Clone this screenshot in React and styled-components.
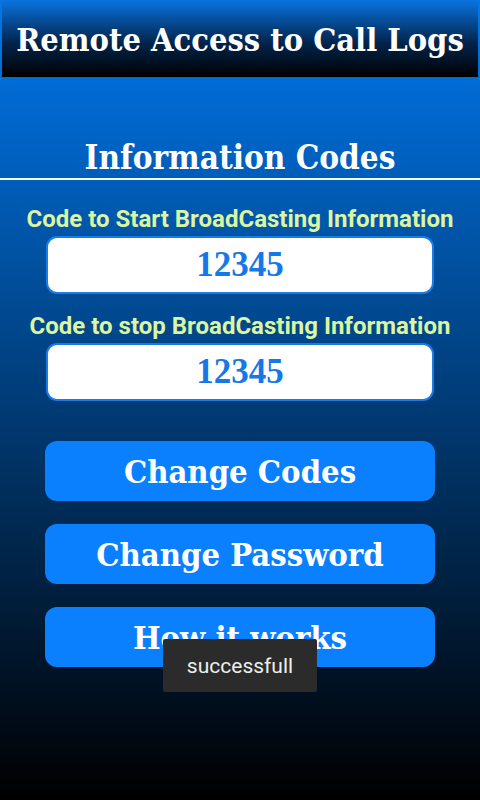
import React from "react";
import styled, { createGlobalStyle } from "styled-components";

const Global = createGlobalStyle`
  html, body { margin: 0; padding: 0; }
  body { width: 480px; height: 800px; overflow: hidden; }
  #root { height: 800px; }
`;

const Screen = styled.div`
  position: relative;
  width: 480px;
  height: 800px;
  background: linear-gradient(to bottom, #0078ee 0%, #000000 100%);
  display: flex;
  flex-direction: column;
  align-items: center;
  overflow: hidden;
`;

const serif = `"DejaVu Serif", "Liberation Serif", serif`;
const sans = `Roboto, "Noto Sans", sans-serif`;

const Header = styled.div`
  align-self: stretch;
  margin: 0 2px;
  height: 77px;
  background: linear-gradient(to bottom, #0a74e0 0%, #02254d 55%, #000000 100%);
  display: flex;
  align-items: center;
  justify-content: center;
  padding-top: 2px;
  box-sizing: border-box;
`;

const Title = styled.h1`
  margin: 0;
  font-family: ${serif};
  font-stretch: condensed;
  font-weight: bold;
  font-size: 32.3px;
  color: #ffffff;
  white-space: nowrap;
`;

const SectionTitle = styled.h2`
  margin: 61px 0 0;
  font-family: ${serif};
  font-stretch: condensed;
  font-weight: bold;
  font-size: 33px;
  line-height: 40px;
  color: #ffffff;
  white-space: nowrap;
`;

const Rule = styled.div`
  align-self: stretch;
  height: 2px;
  background: #f4f8ff;
`;

const Label = styled.div`
  margin-top: ${(p) => p.$top}px;
  font-family: ${sans};
  font-weight: 700;
  font-size: 24px;
  line-height: 28px;
  color: #dcf5a0;
  white-space: nowrap;
`;

const CodeBox = styled.div`
  width: 388px;
  height: 58px;
  margin-top: 3px;
  box-sizing: border-box;
  background: #ffffff;
  border: 2px solid #1a7de6;
  border-radius: 11px;
  display: flex;
  align-items: center;
  justify-content: center;
  font-family: "Liberation Serif", serif;
  font-weight: bold;
  font-size: 35px;
  color: #1677e6;
`;

const Buttons = styled.div`
  margin-top: 40px;
  display: flex;
  flex-direction: column;
  gap: 23px;
`;

const Button = styled.div`
  width: 390px;
  height: 60px;
  border-radius: 12px;
  background: #0a80ff;
  display: flex;
  align-items: center;
  justify-content: center;
  font-family: ${serif};
  font-stretch: condensed;
  font-weight: bold;
  font-size: 32.5px;
  color: #ffffff;
  white-space: nowrap;
`;

const Toast = styled.div`
  position: absolute;
  left: 163px;
  top: 639px;
  width: 154px;
  height: 53px;
  background: #2b2b2b;
  border-radius: 2px;
  display: flex;
  align-items: center;
  justify-content: center;
  font-family: Roboto, sans-serif;
  font-size: 21px;
  color: #eeeeee;
`;

export default function App() {
  return (
    <>
      <Global />
      <Screen>
        <Header>
          <Title>Remote Access to Call Logs</Title>
        </Header>
        <SectionTitle>Information Codes</SectionTitle>
        <Rule />
        <Label $top={25}>Code to Start BroadCasting Information</Label>
        <CodeBox>12345</CodeBox>
        <Label $top={18}>Code to stop BroadCasting Information</Label>
        <CodeBox>12345</CodeBox>
        <Buttons>
          <Button>Change Codes</Button>
          <Button>Change Password</Button>
          <Button>How it works</Button>
        </Buttons>
        <Toast>successfull</Toast>
      </Screen>
    </>
  );
}
